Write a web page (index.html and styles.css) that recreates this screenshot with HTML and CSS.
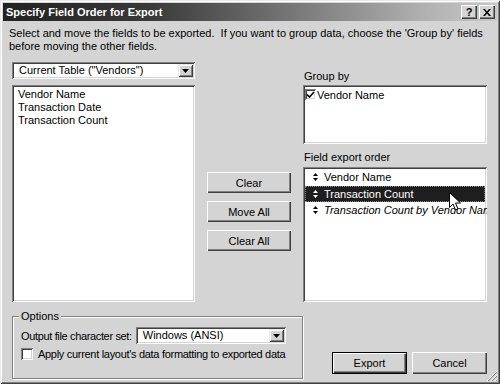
FILE: index.html
```html
<!DOCTYPE html>
<html>
<head>
<meta charset="utf-8">
<link rel="stylesheet" href="styles.css">
</head>
<body>
<div class="window">
  <div class="titlebar">
    <span class="title">Specify Field Order for Export</span>
    <div class="tbtns">
      <span class="tbtn">?</span>
      <span class="tbtn x">
        <svg width="8" height="7" viewBox="0 0 8 7"><path d="M0 0h2l2 2.5L6 0h2L5 3.5 8 7H6L4 4.5 2 7H0l3-3.5z" fill="#000"/></svg>
      </span>
    </div>
  </div>
  <p class="intro">Select and move the fields to be exported.&nbsp; If you want to group data, choose the 'Group by' fields<br>before moving the other fields.</p>
  <div class="main">
    <div class="col-left">
      <div class="combo">
        <span class="combo-text">Current Table ("Vendors")</span>
        <span class="combo-btn"><svg width="7" height="4" viewBox="0 0 7 4"><path d="M0 0h7L3.5 4z" fill="#000"/></svg></span>
      </div>
      <div class="listbox left-list">
        <div class="row">Vendor Name</div>
        <div class="row">Transaction Date</div>
        <div class="row">Transaction Count</div>
      </div>
    </div>
    <div class="col-mid">
      <button class="btn">Clear</button>
      <button class="btn">Move All</button>
      <button class="btn">Clear All</button>
    </div>
    <div class="col-right">
      <div class="label">Group by</div>
      <div class="listbox group-list">
        <div class="grow">
          <span class="chk">
            <svg width="9" height="8" viewBox="0 0 9 8"><path d="M1 3.5l2.5 2.5L8 1" stroke="#000" stroke-width="1.6" fill="none"/></svg>
          </span>
          <span>Vendor Name</span>
        </div>
      </div>
      <div class="label label2">Field export order</div>
      <div class="listbox order-list">
        <div class="orow"><svg class="updn" width="5" height="8" viewBox="0 0 5 8"><path d="M2.5 0L5 3H0zM0 5h5L2.5 8z" fill="#000"/></svg><span>Vendor Name</span></div>
        <div class="orow sel"><svg class="updn" width="5" height="8" viewBox="0 0 5 8"><path d="M2.5 0L5 3H0zM0 5h5L2.5 8z" fill="#fff"/></svg><span>Transaction Count</span></div>
        <div class="orow it"><svg class="updn" width="5" height="8" viewBox="0 0 5 8"><path d="M2.5 0L5 3H0zM0 5h5L2.5 8z" fill="#000"/></svg><span>Transaction Count by Vendor Name</span></div>
        <svg class="cursor" width="13" height="20" viewBox="0 0 13 20"><path d="M0.5 0.5v15l3.5-3.5 2.5 6 2.5-1-2.5-6h5z" fill="#fff" stroke="#000" stroke-width="1"/></svg>
      </div>
    </div>
  </div>
  <div class="bottom">
    <div class="group">
      <span class="legend">Options</span>
      <div class="opt-row">
        <span class="opt-label">Output file character set:</span>
        <div class="combo small">
          <span class="combo-text">Windows (ANSI)</span>
          <span class="combo-btn"><svg width="7" height="4" viewBox="0 0 7 4"><path d="M0 0h7L3.5 4z" fill="#000"/></svg></span>
        </div>
      </div>
      <div class="chk-row">
        <span class="chk big"></span>
        <span class="chk-label">Apply current layout's data formatting to exported data</span>
      </div>
    </div>
    <div class="actions">
      <button class="btn def">Export</button>
      <button class="btn">Cancel</button>
    </div>
  </div>
  <svg class="grip" width="12" height="12" viewBox="0 0 12 12">
    <path d="M11 1L1 11M11 5L5 11M11 9L9 11" stroke="#fff" stroke-width="1"/>
    <path d="M11 2L2 11M11 6L6 11M11 10L10 11" stroke="#808080" stroke-width="1"/>
  </svg>
</div>
</body>
</html>
```

FILE: styles.css
```css
* { box-sizing: border-box; }
html, body { margin: 0; padding: 0; background: #d4d4d4; }
body {
  font-family: "Liberation Sans", Arial, sans-serif;
  font-size: 11px;
  color: #000;
}
.window {
  position: relative;
  width: 500px;
  height: 384px;
  background: #d4d4d4;
  padding: 3px;
  box-shadow: inset 1px 1px 0 #e8e8e8, inset -1px -1px 0 #404040, inset 2px 2px 0 #fff, inset -2px -2px 0 #808080;
  display: flex;
  flex-direction: column;
}
.titlebar {
  height: 18px;
  display: flex;
  align-items: center;
  justify-content: space-between;
  background: linear-gradient(to right, #222 0%, #3a3a3a 30%, #7a7a7a 60%, #b0b0b0 85%, #c8c8c8 100%);
  padding: 0 2px 0 3px;
}
.title {
  color: #fff;
  font-weight: bold;
  font-size: 11px;
  font-family: "Liberation Sans", Arial, sans-serif;
}
.tbtns { display: flex; }
.tbtn {
  width: 16px;
  height: 14px;
  background: #d4d4d4;
  box-shadow: inset 1px 1px 0 #fff, inset -1px -1px 0 #404040, inset -2px -2px 0 #808080;
  font-weight: bold;
  font-size: 11px;
  line-height: 14px;
  display: flex;
  align-items: center;
  justify-content: center;
}
.tbtn.x { margin-left: 2px; }
.intro {
  margin: 6px 0 0 6px;
  line-height: 13px;
  white-space: nowrap;
}
.main {
  margin: 9px 0 0 9px;
  display: flex;
  gap: 12px;
  height: 240px;
}
.col-left {
  width: 183px;
  display: flex;
  flex-direction: column;
  gap: 6px;
}
.combo {
  height: 17px;
  background: #fff;
  display: flex;
  align-items: center;
  justify-content: space-between;
  padding: 2px;
  box-shadow: inset 1px 1px 0 #808080, inset -1px -1px 0 #fff, inset 2px 2px 0 #404040, inset -2px -2px 0 #d4d4d4;
}
.combo-text { padding-left: 5px; line-height: 13px; white-space: nowrap; }
.combo-btn {
  flex: none;
  width: 15px;
  height: 13px;
  background: #d4d4d4;
  box-shadow: inset 1px 1px 0 #e8e8e8, inset -1px -1px 0 #404040, inset 2px 2px 0 #fff, inset -2px -2px 0 #808080;
  display: flex;
  align-items: center;
  justify-content: center;
}
.listbox {
  background: #fff;
  padding: 2px;
  box-shadow: inset 1px 1px 0 #808080, inset -1px -1px 0 #fff, inset 2px 2px 0 #404040, inset -2px -2px 0 #d4d4d4;
}
.left-list { height: 217px; padding: 3px 4px; }
.row { line-height: 13px; padding-left: 2px; }
.col-mid {
  width: 84px;
  display: flex;
  flex-direction: column;
  gap: 8px;
  padding-top: 110px;
}
.btn {
  height: 21px;
  width: 84px;
  border: none;
  background: #d4d4d4;
  font-family: "Liberation Sans", Arial, sans-serif;
  font-size: 11px;
  color: #000;
  padding: 0;
  box-shadow: inset 1px 1px 0 #fff, inset -1px -1px 0 #404040, inset -2px -2px 0 #808080;
}
.col-right {
  width: 184px;
  display: flex;
  flex-direction: column;
  padding-top: 8px;
}
.label { line-height: 13px; height: 13px; margin-left: 1px; }
.group-list { margin-top: 2px; height: 59px; }
.label2 { margin-top: 7px; }
.grow { display: flex; align-items: center; height: 13px; margin-top: 1px; }
.chk {
  flex: none;
  width: 11px;
  height: 11px;
  background: #fff;
  box-shadow: inset 1px 1px 0 #808080, inset -1px -1px 0 #fff, inset 2px 2px 0 #404040, inset -2px -2px 0 #d4d4d4;
  display: inline-flex;
  align-items: center;
  justify-content: center;
  margin-right: 1px;
}
.order-list {
  position: relative;
  margin-top: 3px;
  height: 135px;
  padding: 2px 2px;
  overflow: hidden;
}
.orow {
  height: 16.5px;
  display: flex;
  align-items: center;
  white-space: nowrap;
  padding-left: 8px;
}
.orow .updn { margin-right: 6px; flex: none; }
.orow.sel {
  background: #1e1e1e;
  color: #fff;
  outline: 1px dotted #888;
  outline-offset: -1px;
}
.orow.it span { font-style: italic; }
.cursor { position: absolute; left: 146px; top: 25px; }
.bottom {
  display: flex;
  justify-content: space-between;
  align-items: flex-end;
  margin: 14px 10px 0 9px;
}
.group {
  position: relative;
  width: 291px;
  height: 63px;
  border: 1px solid #808080;
  box-shadow: inset 1px 1px 0 #fff, 1px 1px 0 #fff;
  padding: 10px 0 0 8px;
}
.legend {
  position: absolute;
  top: -7px;
  left: 6px;
  padding: 0 2px;
  background: #d4d4d4;
  line-height: 13px;
}
.opt-row {
  display: flex;
  align-items: center;
  gap: 4px;
}
.opt-label { white-space: nowrap; letter-spacing: -0.35px; }
.combo.small { flex: none; width: 150px; height: 17px; }
.chk-row {
  display: flex;
  align-items: center;
  gap: 4px;
  margin-top: 4px;
}
.chk-label { white-space: nowrap; letter-spacing: -0.3px; }
.chk.big { width: 12px; height: 12px; }
.actions {
  display: flex;
  gap: 5px;
  margin-bottom: 5px;
}
.actions .btn { width: 75px; height: 22px; }
.btn.def {
  box-shadow: inset 0 0 0 1px #000, inset 2px 2px 0 #fff, inset -2px -2px 0 #404040, inset -3px -3px 0 #808080;
}
.grip { position: absolute; right: 2px; bottom: 2px; }
```
